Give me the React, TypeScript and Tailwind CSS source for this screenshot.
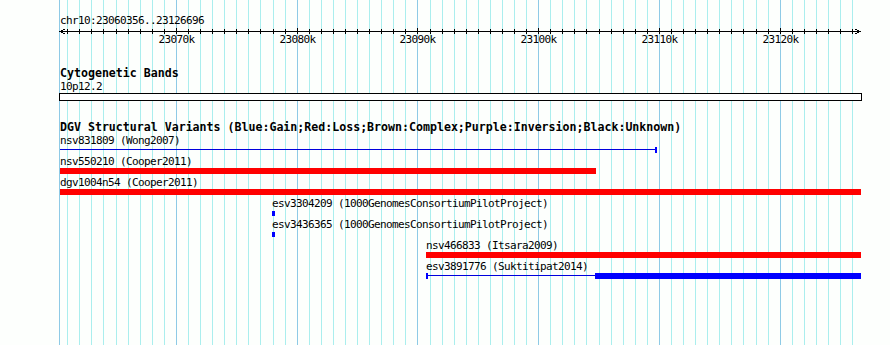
import React from 'react';

const START = 23060356;
const END = 23126696;
const X0 = 60;
const TRACK_W = 801;

const px = (pos: number) => Math.floor(X0 + ((pos - START) * TRACK_W) / (END - START));

const kbs: number[] = [];
for (let k = Math.ceil(START / 1000); k * 1000 <= END; k++) kbs.push(k);

function Grid() {
  return (
    <div className="absolute inset-0">
      <div className="absolute top-0 bottom-0 left-[59px] w-px bg-[#8ecae6]" />
      {kbs.map(k => (
        <div
          key={k}
          className={['absolute top-0 bottom-0 w-px', k % 10 === 0 ? 'bg-[#8ecae6]' : 'bg-[#aaeeee]'].join(' ')}
          style={{ left: px(k * 1000) }}
        />
      ))}
    </div>
  );
}

function Ruler() {
  const right = X0 + TRACK_W;
  return (
    <svg width={890} height={7} className="block" shapeRendering="crispEdges">
      <line x1={X0} y1={4.5} x2={right} y2={4.5} stroke="#000" />
      {kbs.map(k => {
        const x = px(k * 1000) + 0.5;
        return <line key={k} x1={x} y1={k % 10 === 0 ? 1 : 2} x2={x} y2={7} stroke="#000" />;
      })}
      <polyline points={`${X0 + 5},2 ${X0},4.5 ${X0 + 5},7`} fill="none" stroke="#000" />
      <polyline points={`${right - 6},2 ${right - 1},4.5 ${right - 6},7`} fill="none" stroke="#000" />
    </svg>
  );
}

function Label({ children, className = '' }: { children: React.ReactNode; className?: string }) {
  return <div className={`h-[12px] leading-[12px] whitespace-nowrap ${className}`}>{children}</div>;
}

export default function App() {
  const majors = kbs.filter(k => k % 10 === 0);
  return (
    <div className="relative w-[890px] h-[345px] overflow-hidden bg-[#fdfffd] text-black text-[11px] tracking-[-0.62px] font-['DejaVu_Sans_Mono','Liberation_Mono',monospace]">
      <Grid />
      <div className="relative pt-[15px]">
        <Label className="ml-[60px]">chr10:23060356..23126696</Label>
        <Ruler />
        <div className="relative h-[12px] leading-[12px]">
          {majors.map(k => (
            <span key={k} className="absolute top-0 -translate-x-1/2" style={{ left: px(k * 1000) + 0.5 }}>
              {k}k
            </span>
          ))}
        </div>

        <div className="mt-[21px] ml-[60px] h-[13px] leading-[13px] text-[11.6px] tracking-normal font-bold">Cytogenetic Bands</div>
        <Label className="mt-px ml-[60px]">10p12.2</Label>
        <div className="ml-[59px] w-[803px] h-[8px] border border-black bg-white" />

        <div className="mt-[20px] ml-[60px] h-[13px] leading-[13px] text-[11.6px] tracking-normal font-bold whitespace-nowrap">
          DGV Structural Variants (Blue:Gain;Red:Loss;Brown:Complex;Purple:Inversion;Black:Unknown)
        </div>

        <div className="mt-px ml-[60px] flex flex-col">
          <Label>nsv831809 (Wong2007)</Label>
          <div className="relative w-[597px] h-[6px]">
            <div className="absolute top-[2px] left-0 right-0 h-px bg-[#0000dd]" />
            <div className="absolute top-0 right-0 w-[2px] h-[6px] bg-[#0000ff]" />
          </div>

          <Label className="mt-[3px]">nsv550210 (Cooper2011)</Label>
          <div className="w-[536px] h-[6px] bg-[#ff0000]" />

          <Label className="mt-[3px]">dgv1004n54 (Cooper2011)</Label>
          <div className="w-[801px] h-[6px] bg-[#ff0000]" />

          <Label className="mt-[3px] ml-[212px]">esv3304209 (1000GenomesConsortiumPilotProject)</Label>
          <div className="ml-[212px] mt-px w-[3px] h-[5px] bg-[#0000ff]" />

          <Label className="mt-[3px] ml-[212px]">esv3436365 (1000GenomesConsortiumPilotProject)</Label>
          <div className="ml-[212px] mt-px w-[3px] h-[5px] bg-[#0000ff]" />

          <Label className="mt-[3px] ml-[366px]">nsv466833 (Itsara2009)</Label>
          <div className="ml-[366px] w-[435px] h-[6px] bg-[#ff0000]" />

          <Label className="mt-[3px] ml-[366px]">esv3891776 (Suktitipat2014)</Label>
          <div className="relative ml-[366px] w-[435px] h-[6px]">
            <div className="absolute top-[2px] left-0 right-0 h-px bg-[#0000dd]" />
            <div className="absolute top-0 left-0 w-[2px] h-[6px] bg-[#0000ff]" />
            <div className="absolute top-0 left-[169px] w-[266px] h-[6px] bg-[#0000ff]" />
          </div>
        </div>
      </div>
    </div>
  );
}
